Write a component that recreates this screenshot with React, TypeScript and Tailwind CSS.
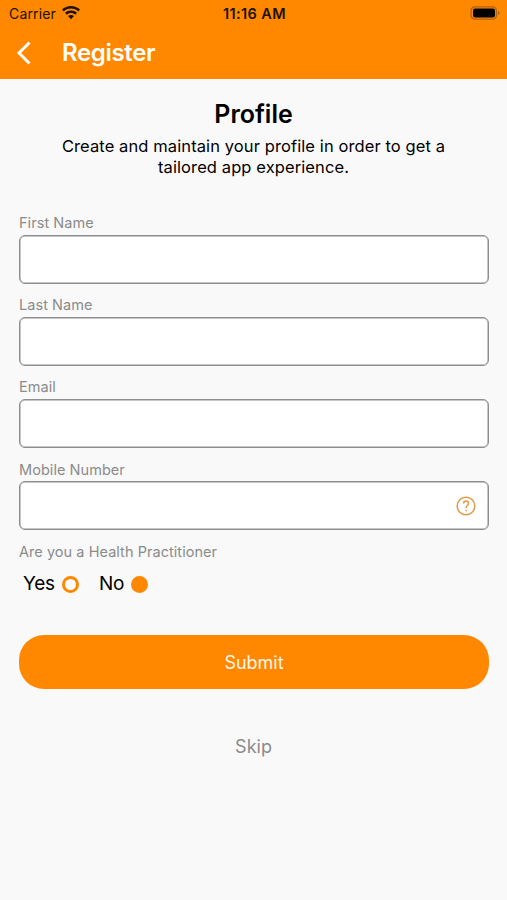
import { useState } from "react";

const Field = ({ label, children }: { label: string; children?: React.ReactNode }) => {
  return (
    <label className="block h-[82.2px]">
      <span className="block h-[20.5px] text-[14.5px] leading-[17px] tracking-[0.05px] text-[#8b8b8b]">{label}</span>
      <span className="flex h-[49px] w-[470px] items-center rounded-[6px] border border-[#8e8e8e] bg-white pr-3 shadow-[inset_0_0_0_0.5px_#8e8e8e]">
        <input className="h-full min-w-0 flex-1 bg-transparent px-3 outline-none" />
        {children}
      </span>
    </label>
  );
};

const Radio = ({ label, checked, onClick }: { label: string; checked: boolean; onClick: () => void }) => {
  return (
    <button
      className="flex items-center gap-[7px] text-[19px] leading-6 tracking-[-0.2px] text-black"
      onClick={onClick}
    >
      <span>{label}</span>
      <span
        className={
          checked
            ? "mt-px size-[17px] rounded-full border-[3px] border-[#ff8800] bg-[#ff8800]"
            : "mt-px size-[17px] rounded-full border-[3px] border-[#ff8800] bg-white"
        }
      />
    </button>
  );
};

function App() {
  const [practitioner, setPractitioner] = useState(false);

  return (
    <div className="flex h-[900px] w-[507px] flex-col bg-[#f9f9f9] font-['Inter',sans-serif]">
      <header className="h-[79px] bg-[#ff8800]">
        {/* Status bar */}
        <div className="grid h-[27px] grid-cols-3 items-center pl-[9px] pr-[7px] text-[14px] text-[#201100]">
          <div className="flex items-center gap-[6px]">
            <span className="tracking-[0.15px]">Carrier</span>
            <svg className="-mt-[2px] fill-current" width="18" height="14" viewBox="0 0 18 14">
              <path d="M9 0C5.5 0 2.4 1.3 0 3.5l1.8 1.9C3.7 3.6 6.2 2.6 9 2.6s5.3 1 7.2 2.8L18 3.5C15.6 1.3 12.5 0 9 0z" />
              <path d="M9 4.5c-2.3 0-4.4.9-6 2.3l1.8 1.9C5.9 7.7 7.4 7 9 7s3.1.7 4.2 1.7L15 6.8c-1.6-1.4-3.7-2.3-6-2.3z" />
              <path d="M9 8.9c-1.1 0-2.2.4-3 1.1l3 3.2 3-3.2c-.8-.7-1.9-1.1-3-1.1z" />
            </svg>
          </div>
          <span className="text-center text-[14.5px] font-semibold tracking-[0.4px]">11:16 AM</span>
          <svg className="-mt-[1px] justify-self-end" width="30" height="14" viewBox="0 0 30 14">
            <rect x="1" y="0.8" width="25.5" height="12.4" rx="4" fill="none" stroke="#ae6010" strokeWidth="1.3" />
            <rect x="3" y="2.6" width="22" height="8.8" rx="2" fill="#000" />
            <path d="M28 5v4c1-.3 1.5-1.1 1.5-2S29 5.3 28 5z" fill="#ae6010" />
          </svg>
        </div>
        <div className="flex h-[52px] items-center pl-[17px]">
          <button aria-label="Back">
            <svg width="14" height="24" viewBox="0 0 14 24" fill="none" stroke="#fff" strokeWidth="3">
              <path d="M12.5 1.5L2 12l10.5 10.5" />
            </svg>
          </button>
          <h1 className="ml-[31px] text-[24px] font-semibold tracking-[-0.35px] text-white">Register</h1>
        </div>
      </header>
      <main className="px-[19px] pt-[18px]">
        <div className="h-[117px] text-center text-black">
          <h2 className="text-[25px] leading-[34px] font-semibold">Profile</h2>
          <p className="mt-[5px] text-[16.5px] leading-[20.5px] tracking-[0.1px]">
            Create and maintain your profile in order to get a
            <br />
            tailored app experience.
          </p>
        </div>
        <Field label="First Name" />
        <Field label="Last Name" />
        <Field label="Email" />
        <Field label="Mobile Number">
          <svg width="20" height="20" viewBox="0 0 20 20" fill="none" stroke="#e09a45" strokeWidth="1.5">
            <circle cx="10" cy="10" r="8.8" />
            <path d="M7.6 7.5c0-1.5 1-2.4 2.4-2.4s2.4 1 2.4 2.3c0 2-2.3 2.1-2.3 4.6M10.1 13.8v1.5" />
          </svg>
        </Field>
        <p className="text-[14.5px] leading-[17px] tracking-[0.05px] text-[#8b8b8b]">Are you a Health Practitioner</p>
        <div className="mt-[12.4px] flex gap-[20px] pl-[4px]">
          <Radio label="Yes" checked={practitioner} onClick={() => setPractitioner(true)} />
          <Radio label="No" checked={!practitioner} onClick={() => setPractitioner(false)} />
        </div>
        <button className="mt-[38.8px] block h-[54px] w-[470px] rounded-[25px] bg-[#ff8800] pt-px text-[18px] text-[#fff6e8]">
          Submit
        </button>
        <button className="mx-auto mt-[46px] block text-[18px] leading-6 text-[#8b8b8b]">Skip</button>
      </main>
    </div>
  );
}

export default App;
